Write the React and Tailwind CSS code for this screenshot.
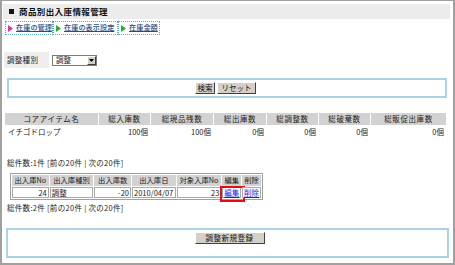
const Tri = ({ color }) => (
  <svg width="5" height="7" viewBox="0 0 5 7" className="shrink-0">
    <path d="M0 0 L5 3.5 L0 7 Z" fill={color} />
  </svg>
);

const Btn = ({ children, className = "" }) => (
  <div
    className={`flex items-center justify-center h-[12px] bg-[#d4d0c8] border border-t-white border-l-white border-b-[#404040] border-r-[#404040] text-[7.5px] text-[#111] leading-none ${className}`}
  >
    {children}
  </div>
);

const sumCols = [
  ["コアアイテム名", 93],
  ["総入庫数", 52],
  ["総現品残数", 63],
  ["総出庫数", 53],
  ["総調整数", 52],
  ["総破棄数", 52],
  ["総販促出庫数", 76],
];
const sumVals = ["イチゴドロップ", "100個", "100個", "0個", "0個", "0個", "0個"];

const detCols = [
  ["出入庫No", 38],
  ["出入庫種別", 45],
  ["出入庫数", 38],
  ["出入庫日", 45],
  ["対象入庫No", 46],
  ["編集", 20],
  ["削除", 20],
];

export default function App() {
  return (
    <div
      className="w-[455px] h-[265px] bg-white border-[#a0a0a0] border-t border-x-2 border-b-2 text-[#222] overflow-hidden"
      style={{ fontFamily: '"Noto Sans CJK JP", "Noto Sans", sans-serif' }}
    >
      {/* title bar */}
      <div className="mt-[3px] ml-[1px] mr-[3px] h-[15px] bg-[#ececec] flex items-center pl-[6px] gap-[5px] text-[8.5px] font-bold text-[#111] leading-none">
        <span className="w-[5px] h-[5px] bg-[#111] inline-block" />
        <span className="tracking-[0.4px]">商品別出入庫情報管理</span>
      </div>

      {/* tabs */}
      <div className="mt-[2px] ml-[3px] flex h-[14px]">
        {[
          ["在庫の管理", "#e8309a", 48],
          ["在庫の表示設定", "#22b030", 65],
          ["在庫金額", "#22b030", 42],
        ].map(([t, c, w]) => (
          <div
            key={t}
            className="flex items-center gap-[3px] pl-[2px] border border-dotted border-[#5aa8c0] text-[7.2px] font-medium leading-none text-[#2a4a80]"
            style={{ width: w }}
          >
            <Tri color={c} />
            <span className="underline">{t}</span>
          </div>
        ))}
      </div>

      {/* filter row */}
      <div className="mt-[17px] flex items-center h-[16px]">
        <div className="ml-[2px] w-[45px] h-[16px] bg-[#eeeeee] flex items-center pl-[3px] text-[7.5px] leading-none tracking-[0.3px]">
          調整種別
        </div>
        <div className="ml-[3px] w-[45px] h-[11px] border border-[#7a7a7a] bg-white flex items-center justify-between text-[7.5px] leading-none">
          <span className="pl-[3px]">調整</span>
          <span className="w-[9px] h-[9px] bg-[#d4d0c8] border border-t-white border-l-white border-b-[#404040] border-r-[#404040] flex items-center justify-center">
            <svg width="5" height="3" viewBox="0 0 5 3">
              <path d="M0 0 L5 0 L2.5 3 Z" fill="#000" />
            </svg>
          </span>
        </div>
      </div>

      {/* search box */}
      <div className="mt-[10px] ml-[5px] w-[440px] h-[20px] border-2 border-[#a9d3e1] flex items-center justify-center gap-[2px] pr-[3px]">
        <Btn className="w-[20px]">検索</Btn>
        <Btn className="w-[39px]">リセット</Btn>
      </div>

      {/* summary table */}
      <div className="mt-[15px] ml-[3px] w-[441px]">
        <div className="flex h-[12px]">
          {sumCols.map(([h, w], i) => (
            <div
              key={h}
              className={`flex items-center justify-center bg-[#d2d2d2] text-[7.5px] leading-none tracking-[0.6px] ${i > 0 ? "border-l border-white" : ""}`}
              style={{ width: w }}
            >
              {h}
            </div>
          ))}
        </div>
        <div className="flex h-[13px]">
          {sumCols.map(([h, w], i) => (
            <div
              key={h}
              className={`flex items-center text-[7.5px] leading-none ${i === 0 ? "justify-start pl-[3px]" : "justify-end pr-[2px]"}`}
              style={{ width: w }}
            >
              {sumVals[i]}
            </div>
          ))}
        </div>
      </div>

      {/* count line 1 */}
      <div className="mt-[20px] ml-[5px] h-[10px] flex items-center text-[7.5px] leading-none tracking-[0.3px]">
        総件数:1件 [前の20件 | 次の20件]
      </div>

      {/* detail table */}
      <div className="mt-[5px] ml-[8px] w-[253px] h-[27px] border border-[#a0a0a0] flex flex-col gap-[1px] p-[1px]">
        <div className="flex gap-[1px] h-[12px]">
          {detCols.map(([h, w]) => (
            <div
              key={h}
              className="flex items-center justify-center bg-[#d2d2d2] text-[7.3px] leading-none"
              style={{ width: w - 1 }}
            >
              {h}
            </div>
          ))}
        </div>
        <div className="flex gap-[1px] h-[11px]">
          {[
            ["24", "end"],
            ["調整", "start"],
            ["-20", "end"],
            ["2010/04/07", "start"],
            ["23", "end"],
            ["編集", "link"],
            ["削除", "link"],
          ].map(([v, a], i) => (
            <div
              key={i}
              className={`relative flex items-center border border-[#a8a8a8] bg-white text-[7.5px] leading-none ${
                a === "end" ? "justify-end pr-[1px]" : a === "start" ? "justify-start pl-[1px]" : "justify-center"
              }`}
              style={{ width: detCols[i][1] - 1 }}
            >
              {a === "link" ? (
                <span className="text-[#1a1aee] underline">{v}</span>
              ) : (
                v
              )}
              {i === 5 && (
                <div className="absolute left-[-3px] top-[-2px] w-[25px] h-[16px] border-2 border-[#e01010]" />
              )}
            </div>
          ))}
        </div>
      </div>

      {/* count line 2 */}
      <div className="mt-[3px] ml-[5px] h-[10px] flex items-center text-[7.5px] leading-none tracking-[0.3px]">
        総件数:2件 [前の20件 | 次の20件]
      </div>

      {/* bottom box */}
      <div className="mt-[15px] ml-[4px] w-[443px] h-[30px] border-2 border-[#a9d3e1] flex items-start justify-center pt-[2px]">
        <Btn className="w-[70px] ml-[4px] tracking-[0.5px]">調整新規登録</Btn>
      </div>
    </div>
  );
}
